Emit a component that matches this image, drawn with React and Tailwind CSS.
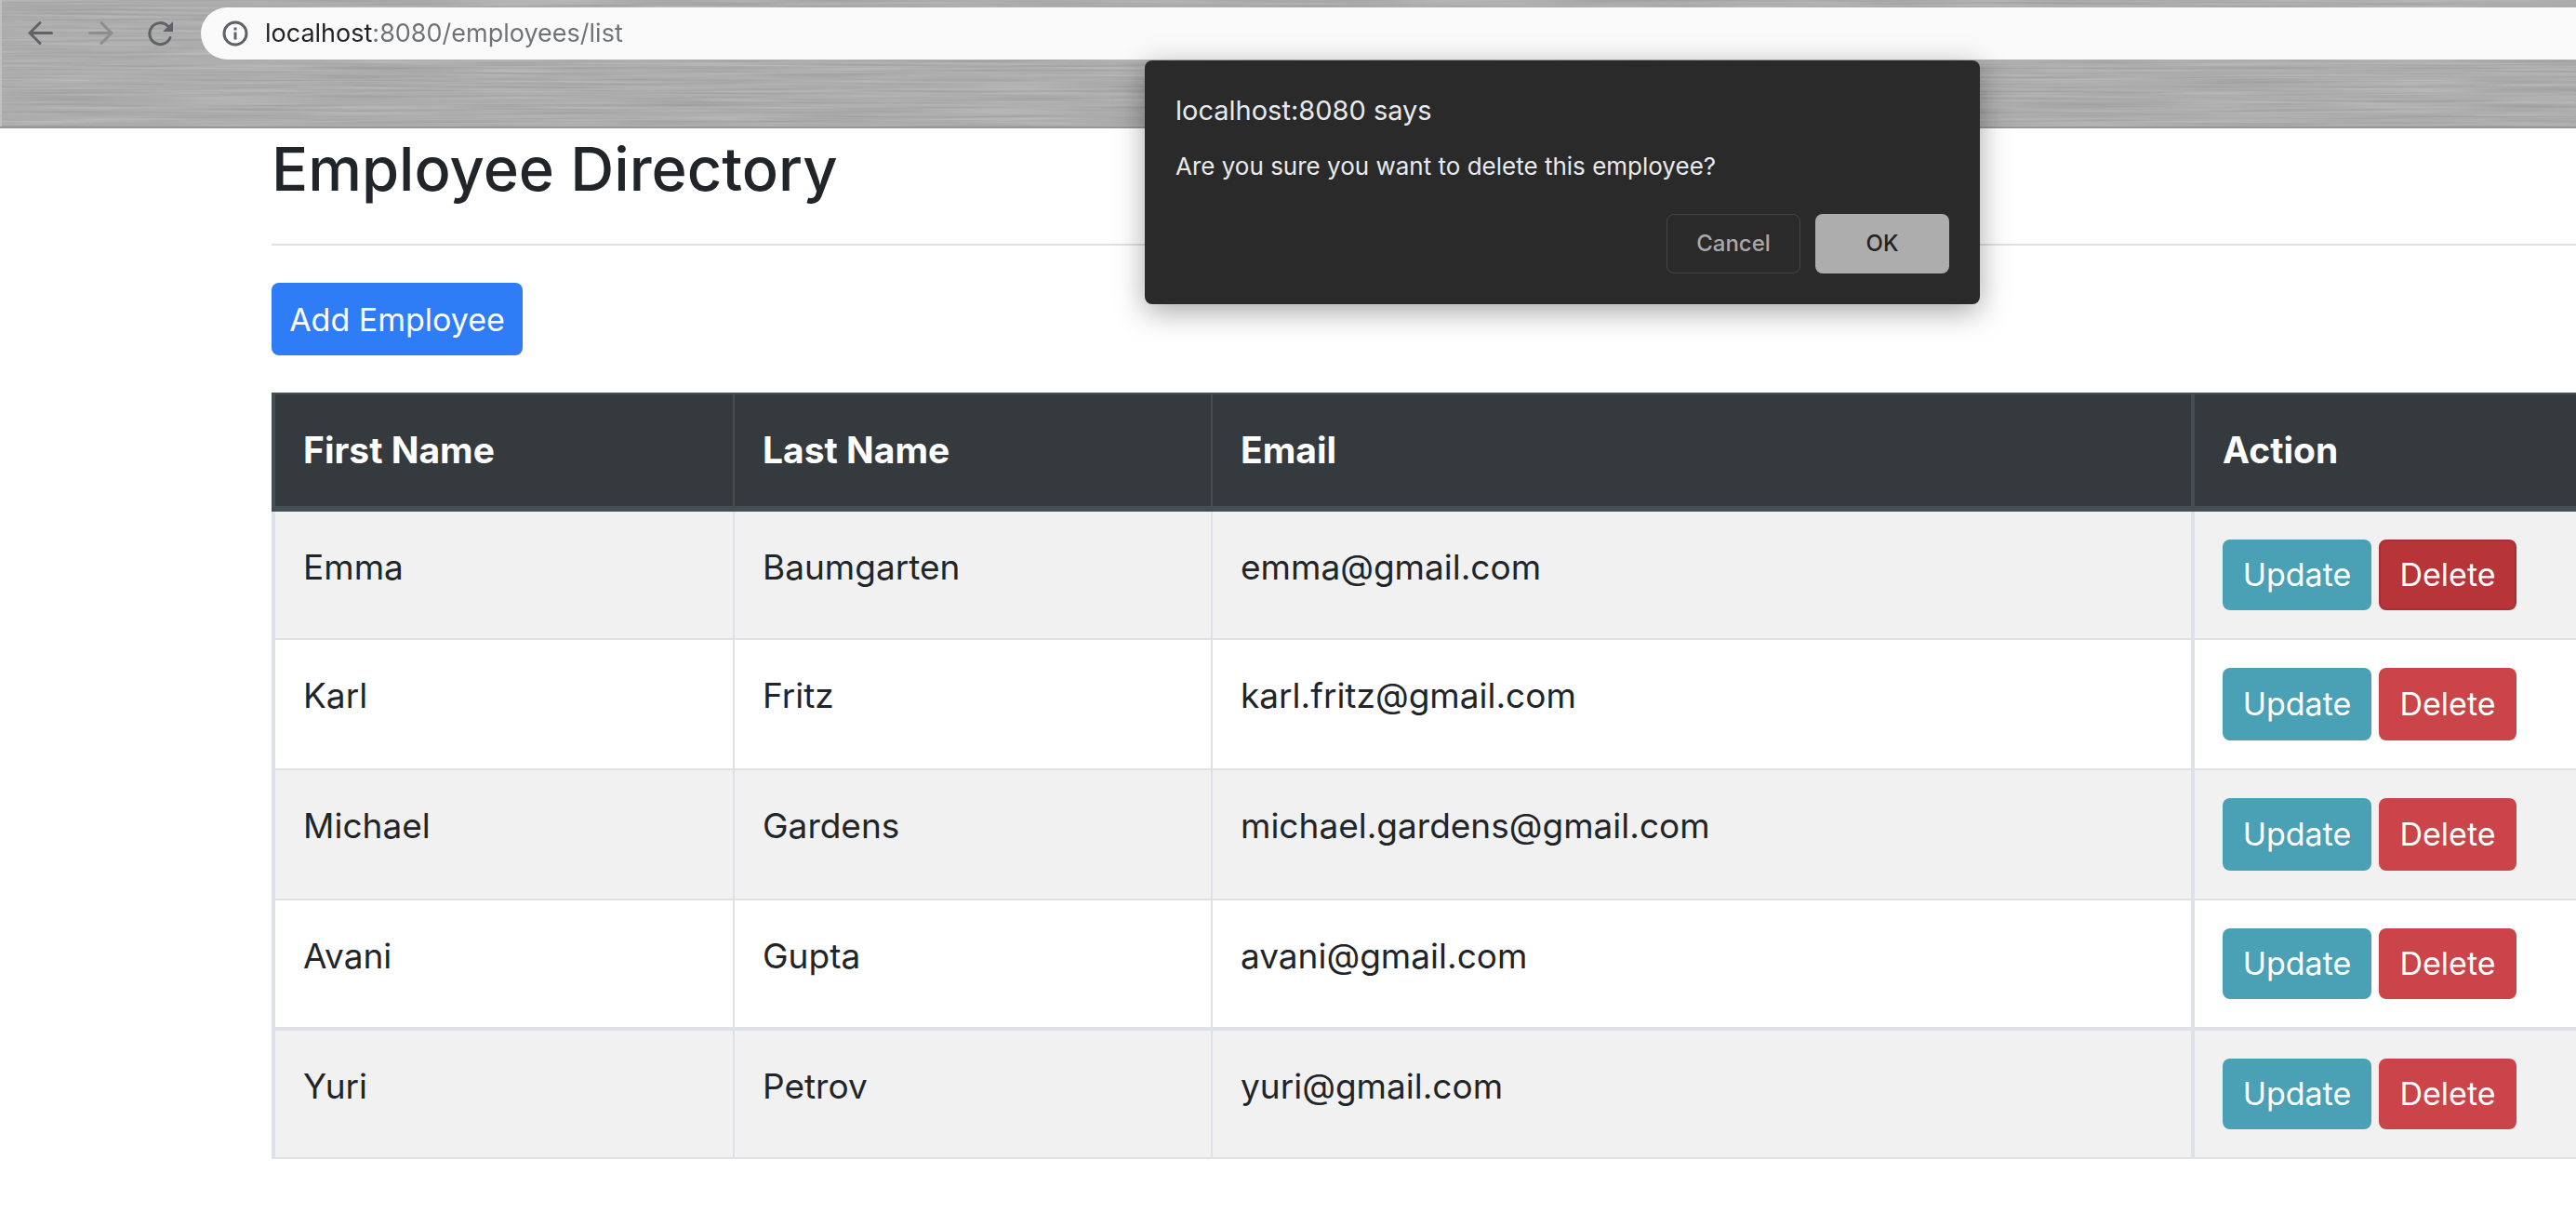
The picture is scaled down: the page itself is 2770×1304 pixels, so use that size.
import React from "react";

const employees = [
  { first: "Emma", last: "Baumgarten", email: "emma@gmail.com", active: true },
  { first: "Karl", last: "Fritz", email: "karl.fritz@gmail.com" },
  { first: "Michael", last: "Gardens", email: "michael.gardens@gmail.com" },
  { first: "Avani", last: "Gupta", email: "avani@gmail.com" },
  { first: "Yuri", last: "Petrov", email: "yuri@gmail.com" },
];

function BrushedMetal() {
  return (
    <svg className="absolute inset-0 h-full w-full" aria-hidden="true">
      <filter id="brushed" x="0" y="0" width="100%" height="100%" colorInterpolationFilters="sRGB">
        <feTurbulence type="fractalNoise" baseFrequency="0.006 0.4" numOctaves="2" seed="4" />
        <feColorMatrix
          values="0.15 0 0 0 0.602
                  0.15 0 0 0 0.602
                  0.15 0 0 0 0.602
                  0 0 0 0 1"
        />
      </filter>
      <rect width="100%" height="100%" filter="url(#brushed)" />
      <rect width="2" height="100%" fill="#c0c0c0" />
    </svg>
  );
}

function BackIcon() {
  return (
    <svg viewBox="0 0 28 28" className="size-7" fill="none" stroke="#5f6368" strokeWidth="3" strokeLinecap="round">
      <path d="M25.500 13.500H3M13 2.500l-11 11 11 11" />
    </svg>
  );
}

function ForwardIcon() {
  return (
    <svg viewBox="0 0 28 28" className="size-7" fill="none" stroke="#8b8d8f" strokeWidth="3" strokeLinecap="round">
      <path d="M2.500 13.500H25M15 2.500l11 11-11 11" />
    </svg>
  );
}

function ReloadIcon() {
  return (
    <svg viewBox="0 0 28 28" className="size-7" fill="none">
      <path d="M25 18.500A11.500 11.500 0 1 1 22.500 6" stroke="#5f6368" strokeWidth="3" strokeLinecap="round" />
      <path d="M28 1v11H17z" fill="#5f6368" />
    </svg>
  );
}

function InfoIcon() {
  return (
    <svg viewBox="0 0 28 28" className="size-7 shrink-0" fill="none">
      <circle cx="14" cy="14" r="12" stroke="#5f6368" strokeWidth="3" />
      <path d="M14 12.500v8M14 7.500v3" stroke="#5f6368" strokeWidth="3" />
    </svg>
  );
}

function BrowserBar() {
  return (
    <header className="relative h-[138px] overflow-hidden border-b-2 border-[#969696] bg-[#ababab]">
      <BrushedMetal />
      <div className="relative flex items-center pt-2 pl-[30px]">
        <div className="flex w-[186px] gap-9">
          <button type="button" aria-label="Back"><BackIcon /></button>
          <button type="button" aria-label="Forward"><ForwardIcon /></button>
          <button type="button" aria-label="Reload"><ReloadIcon /></button>
        </div>
        <div className="flex h-14 flex-1 items-center gap-[18px] rounded-l-full bg-[#fafafa] pl-[23px]">
          <InfoIcon />
          <input
            type="text"
            aria-label="Address"
            defaultValue="localhost:8080/employees/list"
            className="w-full bg-linear-to-r from-[#202124] from-[116px] to-[#6e7175] to-[116px] bg-clip-text text-[27px] leading-10 text-transparent outline-none"
          />
        </div>
      </div>
    </header>
  );
}

function ConfirmDialog() {
  return (
    <div
      role="alertdialog"
      aria-labelledby="dialog-title"
      aria-describedby="dialog-text"
      className="absolute top-[65px] left-[1231px] w-[898px] rounded-lg bg-[#2a2a2a] px-[33px] pt-[34px] pb-[33px] text-[#e8eaed] shadow-[0_8px_32px_rgba(0,0,0,0.35)]"
    >
      <h2 id="dialog-title" className="text-[29px] leading-10">localhost:8080 says</h2>
      <p id="dialog-text" className="mt-5 text-[26px] leading-10">Are you sure you want to delete this employee?</p>
      <div className="mt-[31px] flex justify-end gap-4 text-[24px] font-medium">
        <button type="button" className="h-16 w-36 rounded-lg border border-[#444444] text-[#a8a8a8]">Cancel</button>
        <button type="button" className="h-16 w-36 rounded-lg bg-[#adadad] text-[#232323]">OK</button>
      </div>
    </div>
  );
}

const headCell = "border-t-2 border-b-6 border-[#454d55] p-[30px] text-left font-bold";
const bodyCell = "border-b-2 border-[#dee2e6] p-[30px] align-top group-nth-4:border-b-4";
const action =
  "flex h-[78px] items-center justify-center rounded-lg text-[34px] group-first:h-[76px] group-last:h-[76px] group-nth-4:h-[76px]";

function EmployeeTable() {
  return (
    <table className="mt-10 w-full table-fixed border-separate border-spacing-0 leading-[60px]">
      <colgroup>
        <col className="w-[496px]" />
        <col className="w-[514px]" />
        <col className="w-[1054px]" />
        <col />
      </colgroup>
      <thead className="bg-[#353a3e] text-[39px] text-white">
        <tr>
          <th scope="col" className={headCell + " border-l-4"}>First Name</th>
          <th scope="col" className={headCell + " border-l-2"}>Last Name</th>
          <th scope="col" className={headCell + " border-l-2"}>Email</th>
          <th scope="col" className={headCell + " border-l-4"}>Action</th>
        </tr>
      </thead>
      <tbody className="text-[37px]">
        {employees.map((e) => (
          <tr key={e.email} className="group odd:bg-[#f1f1f1]">
            <td className={bodyCell + " border-l-4"}>{e.first}</td>
            <td className={bodyCell + " border-l-2"}>{e.last}</td>
            <td className={bodyCell + " border-l-2"}>{e.email}</td>
            <td className={bodyCell + " border-l-4"}>
              <div className="flex gap-2 text-white">
                <a href="#update" className={action + " w-40 bg-[#4aa0b5]"}>Update</a>
                <a
                  href="#delete"
                  className={action + (e.active ? " w-37 border-2 border-[#ab2e35] bg-[#b73439]" : " w-37 bg-[#cb444a]")}
                >
                  Delete
                </a>
              </div>
            </td>
          </tr>
        ))}
      </tbody>
    </table>
  );
}

export default function App() {
  return (
    <div className="relative min-h-screen overflow-hidden bg-white font-['Inter',sans-serif] text-[#212529]">
      <BrowserBar />
      <main className="pl-[292px]">
        <h1 className="pt-1 text-[65px] leading-20 font-medium">Employee Directory</h1>
        <hr className="mt-10 border-t-2 border-[#e0e0e0]" />
        <a
          href="#add"
          className="mt-10 flex h-[78px] w-[270px] items-center justify-center rounded-lg bg-[#2f7df6] text-[34px] text-white"
        >
          Add Employee
        </a>
        <EmployeeTable />
      </main>
      <ConfirmDialog />
    </div>
  );
}
